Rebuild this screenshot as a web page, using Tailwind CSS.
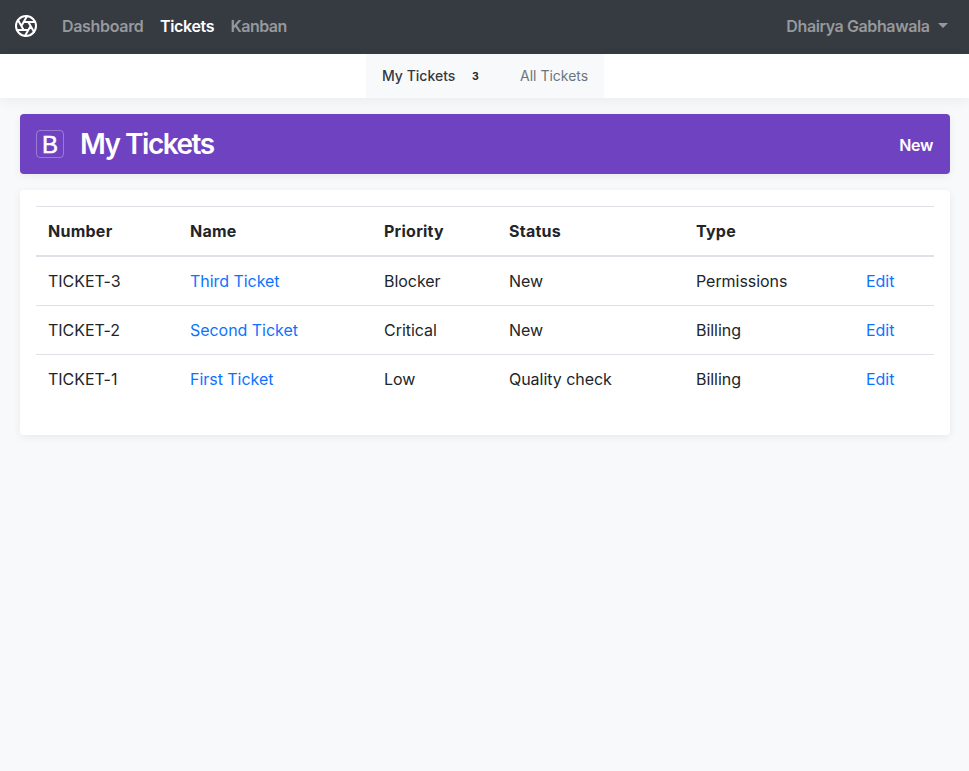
<!DOCTYPE html>
<html lang="en">
<head>
<meta charset="utf-8">
<title>My Tickets</title>
<script src="https://cdn.jsdelivr.net/npm/@tailwindcss/browser@4"></script>
</head>
<body class="min-h-screen bg-[#f8f9fb] font-['Inter',sans-serif] text-base text-[#212529]">
  <nav class="flex h-[54px] items-center bg-[#363a41] pr-[21px] pb-[2px] pl-[14px] font-semibold text-[#96999c]">
    <svg class="mr-6 size-6 text-white" viewBox="0 0 24 24" fill="none" stroke="currentColor" stroke-width="2" stroke-linecap="round" stroke-linejoin="round"><circle cx="12" cy="12" r="10"/><path d="M14.31 8l5.74 9.94M9.69 8h11.48M7.38 12l5.74-9.94M9.69 16L3.95 6.06M14.31 16H2.83M16.62 12l-5.74 9.94"/></svg>
    <a class="w-[98px] tracking-[-0.32px]">Dashboard</a>
    <a class="w-[70.5px] tracking-[-0.35px] text-white">Tickets</a>
    <a class="tracking-[-0.5px]">Kanban</a>
    <a class="ml-auto flex items-center gap-[8.5px] tracking-[-0.4px]">Dhairya Gabhawala
      <svg class="mb-px h-[5px] w-[10px]" viewBox="0 0 10 5" fill="currentColor"><path d="M0 0h10L5 5z"/></svg>
    </a>
  </nav>
  <div class="flex h-11 justify-center bg-white text-sm font-medium shadow-[0_4px_12px_rgba(0,0,0,0.05)]">
    <div class="flex w-[238px] items-center bg-[#f8f9fb] pl-[16.5px]">
      <a class="w-[90px] text-[#343a40]">My Tickets</a>
      <span class="w-12 text-[10.5px] font-bold">3</span>
      <a class="font-normal text-[#6c757d]">All Tickets</a>
    </div>
  </div>
  <main class="mr-[19px] ml-5 pt-4">
    <header class="flex h-[60px] items-center rounded bg-[#6f42c1] pr-[17px] pl-4 text-white shadow-[0_2px_8px_rgba(0,0,0,0.065)]">
      <span class="mr-4 flex size-7 items-center justify-center rounded border border-white/30 pt-px font-['Liberation_Sans',sans-serif] text-[24px] leading-none [-webkit-text-stroke:0.5px_white]">B</span>
      <h1 class="text-[28px] leading-none font-semibold tracking-[-1.5px]">My Tickets</h1>
      <a class="ml-auto pt-[2px] font-semibold tracking-[-0.35px]">New</a>
    </header>
    <section class="mt-4 h-[245px] rounded bg-white p-4 shadow-[0_2px_8px_rgba(0,0,0,0.065)]">
      <table class="w-full table-fixed border-separate border-spacing-0 text-left">
        <colgroup><col class="w-[142px]"><col class="w-[194px]"><col class="w-[125px]"><col class="w-[187px]"><col class="w-[170px]"><col></colgroup>
        <thead class="font-semibold tracking-[0.25px] [&_th]:h-[51px] [&_th]:border-t [&_th]:border-b-2 [&_th]:border-[#dee2e6]">
          <tr>
            <th class="px-3">Number</th><th class="px-3">Name</th><th class="px-3">Priority</th><th class="px-3">Status</th><th class="px-3">Type</th><th></th>
          </tr>
        </thead>
        <tbody class="tracking-[-0.04px] [&_td]:h-[49px] [&_td]:border-b [&_td]:border-[#dee2e6] [&_td]:px-3 [&_tr:last-child_td]:border-transparent">
          <tr><td>TICKET-3</td><td class="text-[#0d73ff]">Third Ticket</td><td>Blocker</td><td>New</td><td>Permissions</td><td class="text-[#0d73ff]">Edit</td></tr>
          <tr><td>TICKET-2</td><td class="text-[#0d73ff]">Second Ticket</td><td>Critical</td><td>New</td><td>Billing</td><td class="text-[#0d73ff]">Edit</td></tr>
          <tr><td>TICKET-1</td><td class="text-[#0d73ff]">First Ticket</td><td>Low</td><td>Quality check</td><td>Billing</td><td class="text-[#0d73ff]">Edit</td></tr>
        </tbody>
      </table>
    </section>
  </main>
</body>
</html>
